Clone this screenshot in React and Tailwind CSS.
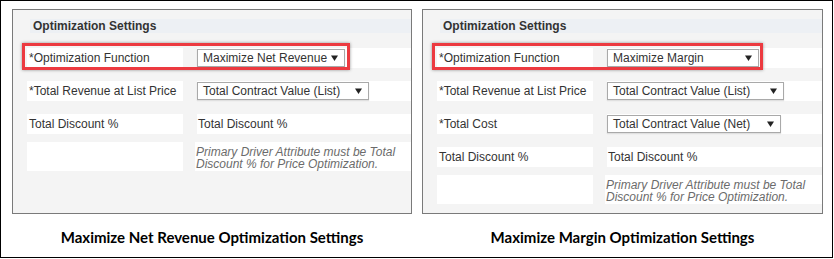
import React from 'react';

const panels = [
  {
    caption: 'Maximize Net Revenue Optimization Settings',
    width: 'w-[400px]',
    redWidth: 'w-[328px]',
    rows: [
      { label: '*Optimization Function', select: 'Maximize Net Revenue', w: 'w-[148px]', red: true },
      { label: '*Total Revenue at List Price', select: 'Total Contract Value (List)', w: 'w-[172px]' },
      { label: 'Total Discount %', text: 'Total Discount %' },
      { note: true },
    ],
  },
  {
    caption: 'Maximize Margin Optimization Settings',
    width: 'w-[401px]',
    redWidth: 'w-[331px]',
    rows: [
      { label: '*Optimization Function', select: 'Maximize Margin', w: 'w-[152px]', red: true },
      { label: '*Total Revenue at List Price', select: 'Total Contract Value (List)', w: 'w-[177px]' },
      { label: '*Total Cost', select: 'Total Contract Value (Net)', w: 'w-[174px]' },
      { label: 'Total Discount %', text: 'Total Discount %' },
      { note: true },
    ],
  },
];

function Select({ value, w }) {
  return (
    <div className={`${w} h-[18px] bg-white border border-[#a9a9a9] shadow-[0_1px_1px_rgba(0,0,0,0.12)] flex items-center justify-between pl-[5px] pr-[6px]`}>
      <span className="leading-none whitespace-nowrap">{value}</span>
      <svg width="7" height="6" viewBox="0 0 7 6" className="flex-shrink-0"><path d="M0 0.5h7L3.5 6z" fill="#222" /></svg>
    </div>
  );
}

function Row({ row, redWidth }) {
  if (row.note) {
    return (
      <div className="h-[33px] flex items-center">
        <div className="ml-[14px] w-[156px] h-[29px] bg-white"></div>
        <div className="ml-[12px] flex-1 h-[29px] bg-white pl-[1px] pt-[4px] italic text-[#6b6b6b] leading-[12px]">
          Primary Driver Attribute must be Total Discount % for Price Optimization.
        </div>
      </div>
    );
  }
  return (
    <div className="relative h-[33px] flex items-center">
      {row.red && (
        <div className={`absolute left-[9px] top-[2px] h-[27px] ${redWidth} border-[3px] border-[#ec3a40] shadow-[0_0_3px_rgba(0,0,0,0.4)]`}></div>
      )}
      <div className="ml-[14px] w-[156px] h-[20px] bg-white flex items-center pl-[2px]">{row.label}</div>
      <div className="ml-[14px] flex-1 h-[20px] bg-white flex items-center">
        {row.select ? <Select value={row.select} w={row.w} /> : <span className="pl-[1px]">{row.text}</span>}
      </div>
    </div>
  );
}

export default function App() {
  return (
    <div className="w-[834px] h-[259px] bg-white">
      <div className="w-[833px] h-[258px] border border-black flex gap-[10px] pl-[11px] pt-[8px]">
        {panels.map(p => (
          <div key={p.caption} className="flex flex-col">
            <div className={`${p.width} h-[205px] border border-[#7a7a7a] bg-[#f4f4f4] pt-[9px] text-[12px] text-[#333] font-['Liberation_Sans',Arial,sans-serif]`}>
              <div className="ml-[17px] h-[14px] bg-[#edf0f4] pl-[3px] font-bold leading-[14px]">Optimization Settings</div>
              <div className="mt-[8px] flex flex-col">
                {p.rows.map((r, i) => <Row key={i} row={r} redWidth={p.redWidth} />)}
              </div>
            </div>
            <div className="mt-[12px] text-center text-[15px] font-bold text-black font-['Lato','Liberation_Sans',sans-serif]">
              {p.caption}
            </div>
          </div>
        ))}
      </div>
    </div>
  );
}
